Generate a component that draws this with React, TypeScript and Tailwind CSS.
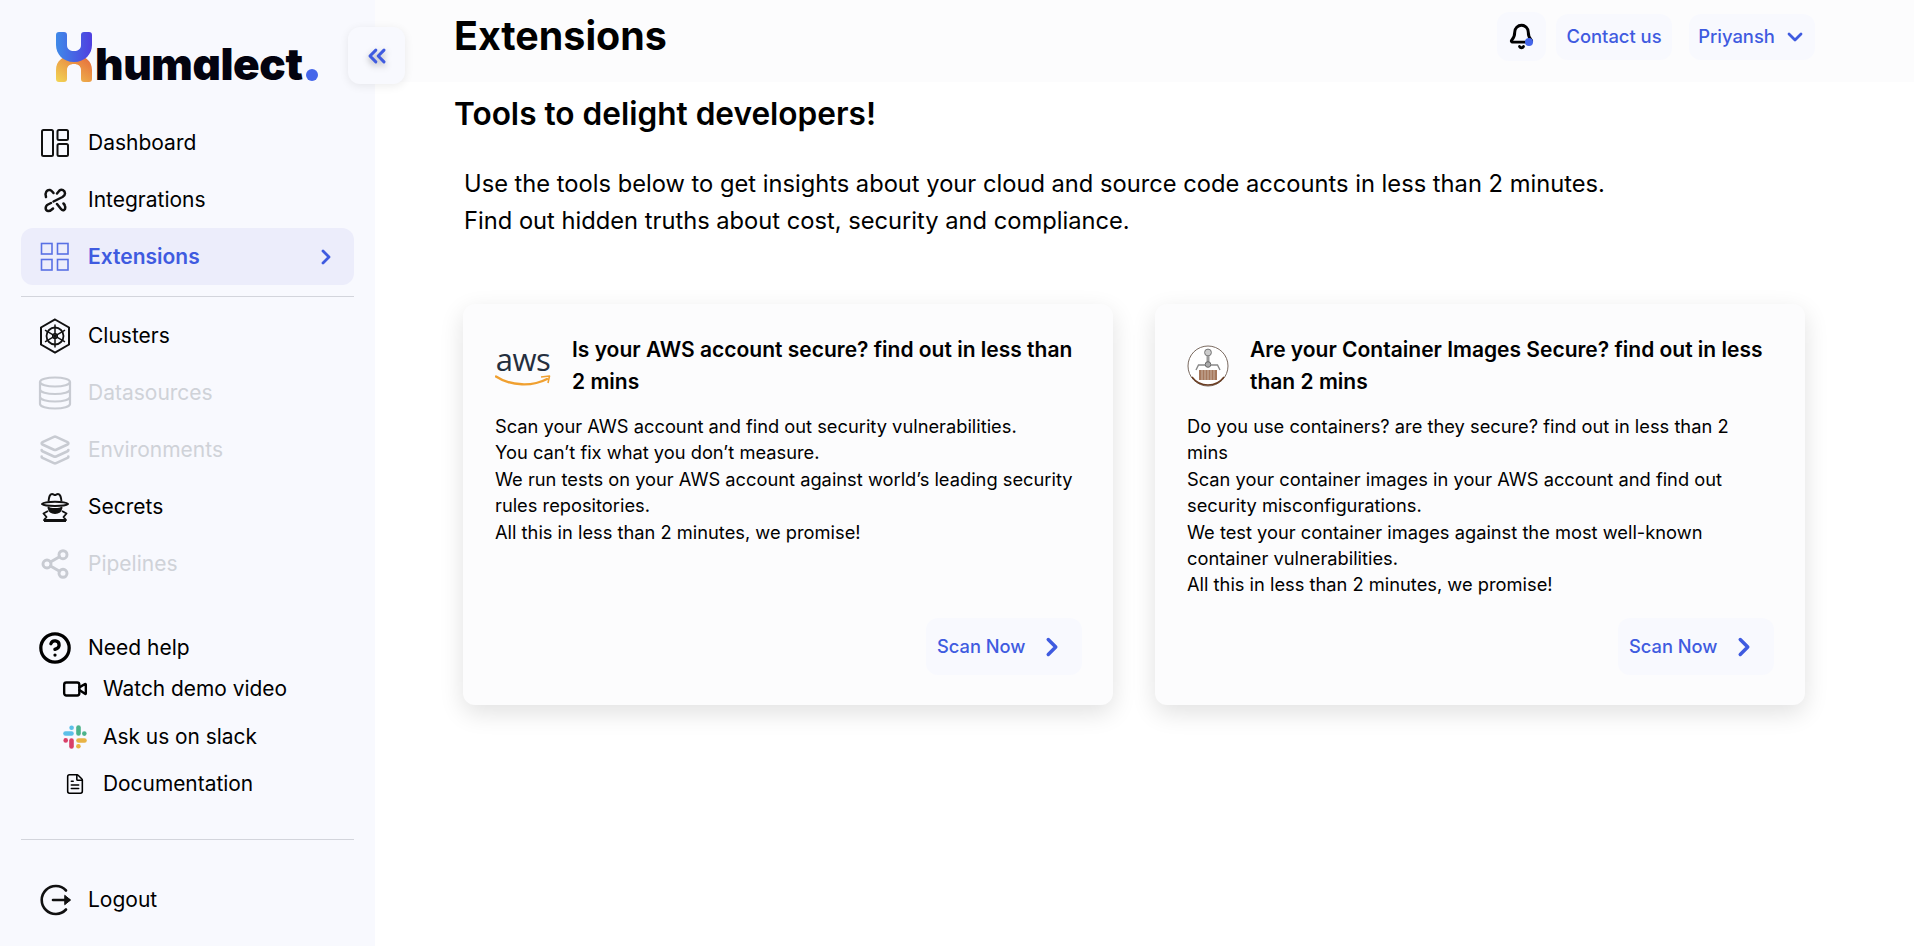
import { ReactNode } from "react";
import { Bell, ChevronDown, ChevronRight, ChevronsLeft, CircleHelp, FileText, Layers, Share2, Video } from "lucide-react";

const BLUE = "#3f5be0";

function DashboardIcon() {
  return (
    <svg width="30" height="30" viewBox="0 0 30 30" fill="none" stroke="#111" strokeWidth="2">
      <rect x="2" y="2" width="11" height="26" rx="1.5" />
      <rect x="17.5" y="2" width="10.5" height="10" rx="1.5" />
      <rect x="17.5" y="16" width="10.5" height="12" rx="1.5" />
    </svg>
  );
}

function IntegrationsIcon() {
  return (
    <svg width="24" height="26" viewBox="0 0 24 26" fill="none" stroke="#111" strokeWidth="2.5" strokeLinecap="round" strokeLinejoin="round">
      <path d="M3 10C1.500 5.500 4 2.400 7 3c1.500.3 2.500 1.800 3.500 3" />
      <path d="M14 6.500 16.500 3.500C18.500 1.800 22 3 22 6.500c0 1.500-1 2.500-2.500 3.500l-9 4.500" />
      <path d="M8 16 5 17.500C2 19 1.800 23.500 5 24c2 .3 3.500-1 5-2.500" />
      <path d="M14 17 18 22c2 2.500 5 1 4-3-.2-1-1-2-1.500-2.500" />
    </svg>
  );
}

function GridIcon() {
  return (
    <svg width="30" height="30" viewBox="0 0 30 30" fill="none" stroke={BLUE} strokeWidth="1.6" opacity="0.85">
      <rect x="1.5" y="1.5" width="10.5" height="10.5" />
      <rect x="17.5" y="1.5" width="10.5" height="10.5" />
      <rect x="1.5" y="17.5" width="10.5" height="10.5" />
      <rect x="17.5" y="17.5" width="10.5" height="10.5" />
    </svg>
  );
}

function ClusterIcon() {
  return (
    <svg width="32" height="36" viewBox="0 0 32 36" fill="none" stroke="#111">
      <path d="M16 1.5 30 9.5v17L16 34.5 2 26.5v-17z" strokeWidth="2" />
      <circle cx="16" cy="18" r="8.5" strokeWidth="1.8" />
      <circle cx="16" cy="18" r="2.4" strokeWidth="1.4" />
      <path d="M16 6.5v23M6 12.2l20 11.6M26 12.2 6 23.8" strokeWidth="1.5" />
    </svg>
  );
}

function DatabaseIcon() {
  return (
    <svg width="34" height="34" viewBox="0 0 34 34" fill="none" stroke="#c8cbd2" strokeWidth="2.2">
      <ellipse cx="17" cy="6" rx="15" ry="4.5" />
      <path d="M2 6v22c0 2.500 6.700 4.500 15 4.500S32 30.500 32 28V6" />
      <path d="M2 13.500c0 2.500 6.700 4.500 15 4.500s15-2 15-4.500" />
      <path d="M2 21c0 2.500 6.700 4.500 15 4.500S32 23.500 32 21" />
    </svg>
  );
}

function SpyIcon() {
  return (
    <svg width="30" height="30" viewBox="0 0 30 30" fill="none" stroke="#111" strokeWidth="1.9" strokeLinejoin="round">
      <path d="M8.500 9.500C9 5 9.500 2 12 2c1.500 0 2 1 3 1s1.500-1 3-1c2.500 0 3 3 3.500 7.500" />
      <path d="M2 12c3-3 23-3 26 0-3 2.600-23 2.600-26 0z" />
      <path d="M8.500 15.500c1.500 2 11.500 2 13 0-.5 3.500-3 5.500-6.500 5.500s-6-2-6.500-5.500z" fill="#111" />
      <path d="M8 19 3.500 21.500l3 3.500L4 28h22l-2.500-3 3-3.500L22 19" />
      <path d="M4 29.300h22" strokeWidth="1.600" />
    </svg>
  );
}

function SlackIcon() {
  return (
    <svg width="24" height="24" viewBox="0 0 24 24" fill="none" strokeLinecap="round" strokeWidth="4.6">
      <path d="M2.500 8.500h6" stroke="#5cc0e8" />
      <path d="M8.600 2.800h.01" stroke="#5cc0e8" />
      <path d="M15.500 2.500v6" stroke="#4cb38a" />
      <path d="M21.300 8.600h.01" stroke="#4cb38a" />
      <path d="M15.500 15.500h6" stroke="#e8b344" />
      <path d="M15.400 21.300h.01" stroke="#e8b344" />
      <path d="M8.500 15.500v6" stroke="#d93f68" />
      <path d="M2.700 15.400h.01" stroke="#d93f68" />
    </svg>
  );
}

function LogoutIcon() {
  return (
    <svg width="34" height="32" viewBox="0 0 34 32" fill="none" stroke="#111" strokeWidth="2.600" strokeLinecap="round">
      <path d="M28 6.500A14 14 0 1 0 28 25.500" />
      <path d="M15 16h16" />
      <path d="M27 11.500 32.500 16 27 20.500z" fill="#111" strokeWidth="1" strokeLinejoin="round" />
    </svg>
  );
}

function LogoMark() {
  return (
    <svg width="36" height="50" viewBox="0 0 36 50" fill="none">
      <defs>
        <linearGradient id="markTop" x1="0" y1="0" x2="1" y2="0">
          <stop offset="0" stopColor="#3f8ae8" />
          <stop offset="1" stopColor="#4f3fe0" />
        </linearGradient>
        <linearGradient id="markBottom" x1="0" y1="1" x2="1" y2="0">
          <stop offset="0" stopColor="#f2d654" />
          <stop offset="1" stopColor="#e5643a" />
        </linearGradient>
      </defs>
      <path d="M8 50H3a3 3 0 0 1-3-3V38c0-9 7-15 18-15s18 6 18 15v9a3 3 0 0 1-3 3h-5a3 3 0 0 1-3-3v-9c0-4-3-6-7-6s-7 2-7 6v9a3 3 0 0 1-3 3z" fill="url(#markBottom)" />
      <path d="M0 3a3 3 0 0 1 3-3h5a3 3 0 0 1 3 3v10c0 4 3 6 7 6s7-2 7-6V3a3 3 0 0 1 3-3h5a3 3 0 0 1 3 3v10c0 9-7 17-18 17S0 22 0 13z" fill="url(#markTop)" />
    </svg>
  );
}

function AwsLogo() {
  return (
    <div className="w-[56px] shrink-0 flex flex-col items-center">
      <span className="font-[family-name:'Open_Sans',sans-serif] text-[31px] leading-[28px] text-[#252f3e] tracking-[-0.5px]">aws</span>
      <svg width="56" height="14" viewBox="0 0 56 14" fill="none" className="mt-[1px]">
        <path d="M1 2.500C16 12.500 38 12.500 52 5" stroke="#f0a030" strokeWidth="2.400" strokeLinecap="round" />
        <path d="M46 3 54.500 2 53 9" stroke="#f0a030" strokeWidth="1.600" strokeLinejoin="round" />
      </svg>
    </div>
  );
}

function ContainerLogo() {
  return (
    <svg width="42" height="42" viewBox="0 0 42 42" fill="none" className="shrink-0">
      <circle cx="21" cy="21" r="20" fill="#fff" stroke="#7a6a60" strokeWidth="1" />
      <path d="M5 32a20 20 0 0 0 32 0" stroke="#6b3d22" strokeWidth="1.400" />
      <circle cx="21" cy="7.500" r="3.400" fill="#ccc" stroke="#777" />
      <path d="M21 11v9" stroke="#999" strokeWidth="3" />
      <circle cx="21" cy="19.500" r="2.800" fill="#aaa" stroke="#666" />
      <path d="M18 20H11.500l-2.500 5M24 20h6.500l2.500 5" stroke="#888" strokeWidth="1.400" />
      <rect x="12" y="25" width="18" height="10" fill="#a5785c" />
      <path d="M15 25v10M18 25v10M21 25v10M24 25v10M27 25v10" stroke="#d6c4b6" strokeWidth="0.800" />
    </svg>
  );
}

function NavRow({ icon, label, tone = "normal" }: { icon: ReactNode; label: string; tone?: "normal" | "off" }) {
  return (
    <div className={`h-[57px] flex items-center gap-[15px] px-4 text-[21px] ${tone === "off" ? "text-[#cfd2d8]" : "text-black"}`}>
      <span className="w-9 flex justify-center shrink-0">{icon}</span>
      {label}
    </div>
  );
}

function HelpRow({ icon, label }: { icon: ReactNode; label: string }) {
  return (
    <div className="h-[42px] flex items-center gap-[10px] pl-9 text-[20.900px] text-black">
      <span className="w-9 flex justify-center shrink-0">{icon}</span>
      {label}
    </div>
  );
}

function Sidebar() {
  return (
    <aside className="relative w-[375px] shrink-0 h-[946px] bg-[#f8f9fe] px-[21px] flex flex-col">
      <div className="h-[114px] flex items-start pt-[32px] pl-[35px] shrink-0">
        <LogoMark />
        <span className="ml-[3px] mt-[12px] text-[44px] leading-[40px] font-black tracking-[-0.4px] text-[#03030f] [font-feature-settings:'cv11']">humalect</span>
        <span className="w-[12px] h-[12px] rounded-full bg-[#4566ea] mt-[37px] ml-[3px]" />
      </div>

      <NavRow icon={<DashboardIcon />} label="Dashboard" />
      <NavRow icon={<IntegrationsIcon />} label="Integrations" />
      <div className="h-[57px] flex items-center gap-[15px] px-4 rounded-xl bg-[#ecedfb] text-[21px] font-semibold text-[#3f5be0]">
        <span className="w-9 flex justify-center shrink-0"><GridIcon /></span>
        Extensions
        <ChevronRight size={24} strokeWidth={2.800} className="ml-auto" />
      </div>
      <div className="h-px bg-[#d3d5dc] mt-[11px] mb-[10px]" />

      <NavRow icon={<ClusterIcon />} label="Clusters" />
      <NavRow icon={<DatabaseIcon />} label="Datasources" tone="off" />
      <NavRow icon={<Layers size={32} strokeWidth={2} className="text-[#c8cbd2]" />} label="Environments" tone="off" />
      <NavRow icon={<SpyIcon />} label="Secrets" />
      <NavRow icon={<Share2 size={32} strokeWidth={2.200} className="text-[#c8cbd2]" />} label="Pipelines" tone="off" />

      <div className="h-[40px] mt-[36px] flex items-center gap-[15px] px-4 text-[21px] text-black">
        <span className="w-9 flex justify-center shrink-0"><CircleHelp size={34} strokeWidth={2.300} /></span>
        Need help
      </div>
      <HelpRow icon={<Video size={26} strokeWidth={2.200} />} label="Watch demo video" />
      <div className="mt-[6px]"><HelpRow icon={<SlackIcon />} label="Ask us on slack" /></div>
      <div className="mt-[5px]"><HelpRow icon={<FileText size={22} strokeWidth={1.700} />} label="Documentation" /></div>

      <div className="h-px bg-[#d3d5dc] mt-[34px]" />
      <div className="mt-[31px]"><NavRow icon={<LogoutIcon />} label="Logout" /></div>

      <button className="absolute left-[348px] top-[27px] w-[57px] h-[57px] rounded-xl bg-[#f8f9fe] shadow-[0_2px_10px_rgba(0,0,0,0.08)] flex items-center justify-center text-[#3f5be0]">
        <ChevronsLeft size={28} strokeWidth={2.600} className="drop-shadow-[0_3px_3px_rgba(0,0,0,0.3)]" />
      </button>
    </aside>
  );
}

function ScanCard({ logo, title, lines }: { logo: ReactNode; title: string; lines: string[] }) {
  return (
    <div className="w-[650px] h-[401px] rounded-xl bg-[#fcfcfd] shadow-[0_8px_24px_rgba(0,0,0,0.12)] pl-[32px] pr-[31px] pt-[30px] pb-[30px] flex flex-col">
      <div className="flex items-center gap-[21px]">
        {logo}
        <h2 className="flex-1 text-[21px] leading-[32px] font-semibold text-black">{title}</h2>
      </div>
      <div className="mt-[15px] text-[18.300px] leading-[26.400px] text-black">
        {lines.map((line) => (
          <div key={line}>{line}</div>
        ))}
      </div>
      <button className="mt-auto self-end w-[156px] h-[57px] rounded-xl bg-[#f8f9fe] pl-[11px] pr-[15px] flex items-center justify-between text-[18.300px] font-medium text-[#3f5be0]">
        Scan Now
        <ChevronRight size={30} strokeWidth={2.800} />
      </button>
    </div>
  );
}

export default function App() {
  return (
    <div className="flex w-[1914px] h-[946px] overflow-hidden bg-white font-[family-name:Inter,sans-serif]">
      <Sidebar />
      <main className="flex-1 min-w-0">
        <header className="h-[82px] bg-[#fcfcfd] pl-[79px] pr-[99px] flex items-center">
          <h1 className="text-[39.400px] leading-[46px] font-bold text-black -mt-[10px]">Extensions</h1>
          <div className="ml-auto flex items-center -mt-[9px]">
            <div className="relative w-[49px] h-[49px] rounded-xl bg-[#f8f9fe] flex items-center justify-center">
              <Bell size={27} strokeWidth={2.600} className="text-black" />
              <span className="absolute left-[28px] top-[26px] w-2 h-2 rounded-full bg-[#4566ea]" />
            </div>
            <div className="ml-[10px] w-[116px] h-[46px] pt-[1px] rounded-xl bg-[#f8f9fe] flex items-center justify-center text-[18.400px] font-medium text-[#3f5be0]">Contact us</div>
            <div className="ml-[17px] w-[126px] h-[46px] pt-[1px] pl-[1px] rounded-xl bg-[#f8f9fe] flex items-center justify-center gap-[8px] text-[18.400px] font-medium text-[#3f5be0]">
              Priyansh
              <ChevronDown size={24} strokeWidth={2.800} />
            </div>
          </div>
        </header>

        <div className="pl-[79px]">
          <h2 className="mt-[14px] text-[31.600px] leading-[36px] font-semibold text-black">Tools to delight developers!</h2>
          <p className="mt-[33px] ml-[10px] text-[23.700px] leading-[37px] text-black">
            Use the tools below to get insights about your cloud and source code accounts in less than 2 minutes.
            <br />
            Find out hidden truths about cost, security and compliance.
          </p>
          <div className="mt-[65px] ml-[9px] flex gap-[42px]">
            <ScanCard
              logo={<AwsLogo />}
              title="Is your AWS account secure? find out in less than 2 mins"
              lines={[
                "Scan your AWS account and find out security vulnerabilities.",
                "You can’t fix what you don’t measure.",
                "We run tests on your AWS account against world’s leading security rules repositories.",
                "All this in less than 2 minutes, we promise!",
              ]}
            />
            <ScanCard
              logo={<ContainerLogo />}
              title="Are your Container Images Secure? find out in less than 2 mins"
              lines={[
                "Do you use containers? are they secure? find out in less than 2 mins",
                "Scan your container images in your AWS account and find out security misconfigurations.",
                "We test your container images against the most well-known container vulnerabilities.",
                "All this in less than 2 minutes, we promise!",
              ]}
            />
          </div>
        </div>
      </main>
    </div>
  );
}
